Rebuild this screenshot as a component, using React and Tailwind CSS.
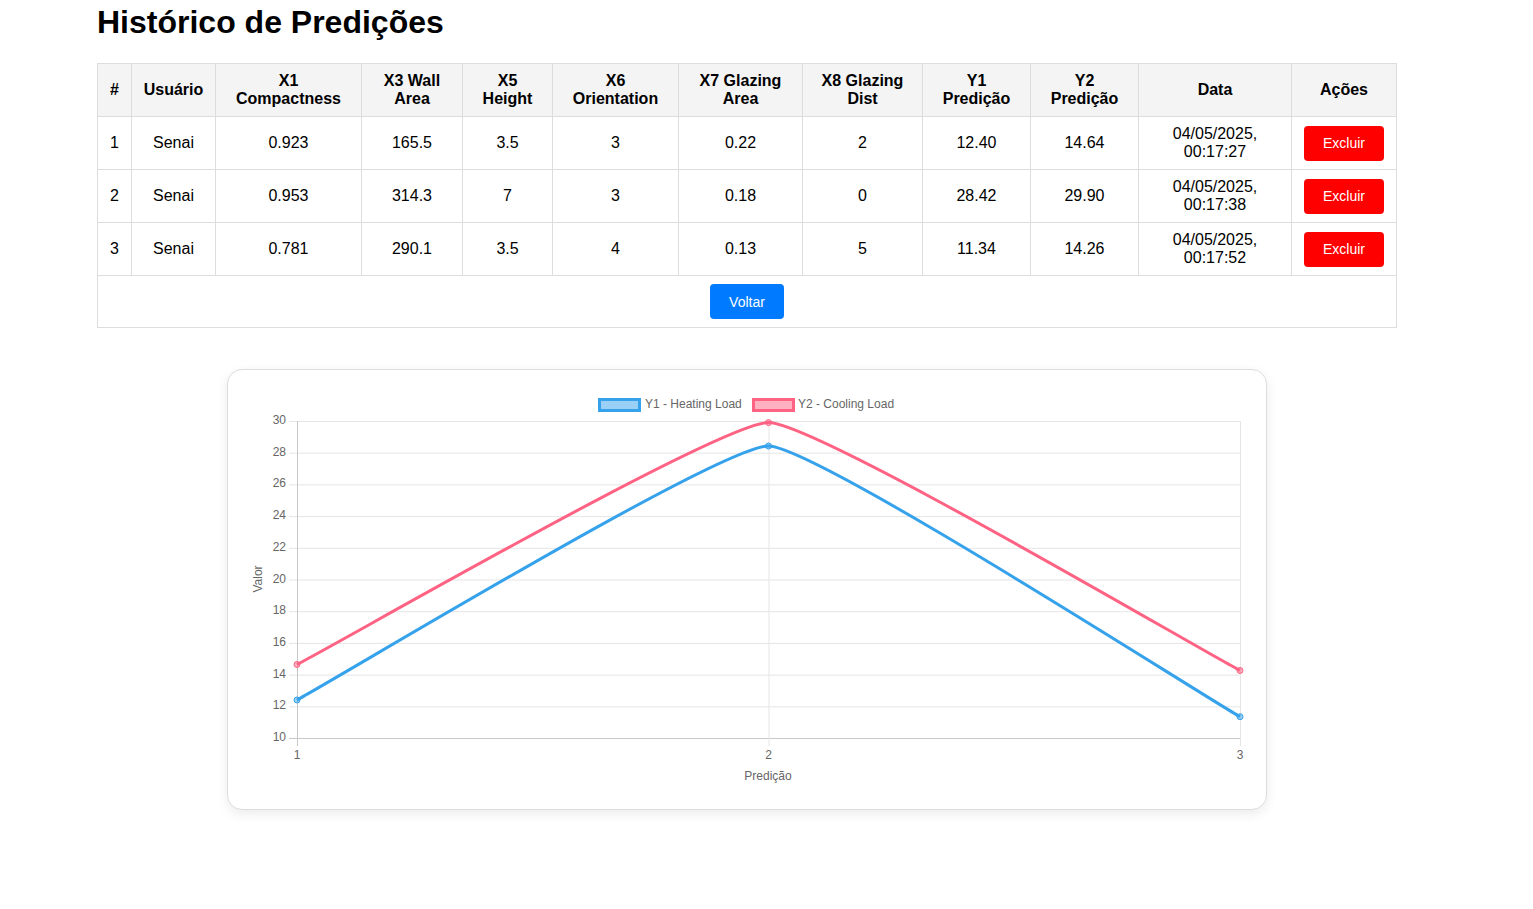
import React from 'react';

const rows = [
  { id: 1, user: 'Senai', x1: '0.923', x3: '165.5', x5: '3.5', x6: '3', x7: '0.22', x8: '2', y1: 12.4, y2: 14.64, date: '04/05/2025,', time: '00:17:27' },
  { id: 2, user: 'Senai', x1: '0.953', x3: '314.3', x5: '7', x6: '3', x7: '0.18', x8: '0', y1: 28.42, y2: 29.9, date: '04/05/2025,', time: '00:17:38' },
  { id: 3, user: 'Senai', x1: '0.781', x3: '290.1', x5: '3.5', x6: '4', x7: '0.13', x8: '5', y1: 11.34, y2: 14.26, date: '04/05/2025,', time: '00:17:52' },
];

const headers = [
  ['#', 'w-[34px]'],
  ['Usuário', 'w-[84px]'],
  ['X1\nCompactness', 'w-[146px]'],
  ['X3 Wall Area', 'w-[101px]'],
  ['X5 Height', 'w-[90px]'],
  ['X6 Orientation', 'w-[126px]'],
  ['X7 Glazing Area', 'w-[124px]'],
  ['X8 Glazing Dist', 'w-[120px]'],
  ['Y1 Predição', 'w-[108px]'],
  ['Y2 Predição', 'w-[108px]'],
  ['Data', 'w-[153px]'],
  ['Ações', 'w-[105px]'],
];

// geometria do gráfico (coordenadas relativas ao interior do cartão)
const X0 = 69;
const X1 = 1012;
const YTOP = 51;
const YBOT = 368;
const px = (i) => X0 + (i * (X1 - X0)) / 2;
const py = (v) => YBOT - ((v - 10) * (YBOT - YTOP)) / 20;

function curvePath(values, t = 0.1) {
  const pts = values.map((v, i) => ({ x: px(i), y: py(v) }));
  const cps = pts.map((p, i) => {
    const prev = pts[i - 1] || p;
    const next = pts[i + 1] || p;
    const d01 = Math.hypot(p.x - prev.x, p.y - prev.y);
    const d12 = Math.hypot(next.x - p.x, next.y - p.y);
    const s = d01 + d12 || 1;
    const fa = (t * d01) / s;
    const fb = (t * d12) / s;
    return {
      prev: { x: p.x - fa * (next.x - prev.x), y: p.y - fa * (next.y - prev.y) },
      next: { x: p.x + fb * (next.x - prev.x), y: p.y + fb * (next.y - prev.y) },
    };
  });
  let d = `M${pts[0].x},${pts[0].y}`;
  for (let i = 1; i < pts.length; i++) {
    const a = cps[i - 1].next;
    const b = cps[i].prev;
    d += ` C${a.x},${a.y} ${b.x},${b.y} ${pts[i].x},${pts[i].y}`;
  }
  return d;
}

function Chart() {
  const ticks = [10, 12, 14, 16, 18, 20, 22, 24, 26, 28, 30];
  const y1 = rows.map((r) => r.y1);
  const y2 = rows.map((r) => r.y2);
  return (
    <svg width="1038" height="439" className="block" style={{ fontFamily: '"Liberation Sans", Arial, sans-serif' }}>
      {/* legenda */}
      <rect x="371.5" y="29.5" width="40" height="11" fill="rgba(54,162,235,0.5)" stroke="rgb(54,162,235)" strokeWidth="3" />
      <text x="417" y="38" fontSize="12" fill="#666">Y1 - Heating Load</text>
      <rect x="525.5" y="29.5" width="40" height="11" fill="rgba(255,99,132,0.5)" stroke="rgb(255,99,132)" strokeWidth="3" />
      <text x="570" y="38" fontSize="12" fill="#666">Y2 - Cooling Load</text>

      {/* grade horizontal */}
      {ticks.map((v) => (
        <g key={v}>
          <line x1={X0 - 8} x2={X1} y1={py(v) + 0.5} y2={py(v) + 0.5} stroke={v === 10 ? '#c8c8c8' : '#e5e5e5'} strokeWidth="1" />
          <text x={X0 - 11} y={py(v) + 3} fontSize="12" fill="#666" textAnchor="end">{v}</text>
        </g>
      ))}
      {/* grade vertical */}
      {[0, 1, 2].map((i) => (
        <g key={i}>
          <line x1={px(i) + 0.5} x2={px(i) + 0.5} y1={YTOP} y2={YBOT + 8} stroke={i === 0 ? '#c8c8c8' : '#e5e5e5'} strokeWidth="1" />
          <text x={px(i)} y={389} fontSize="12" fill="#666" textAnchor="middle">{i + 1}</text>
        </g>
      ))}
      <text x="540" y="410" fontSize="12" fill="#666" textAnchor="middle">Predição</text>
      <text x="34" y="209" fontSize="12" fill="#666" textAnchor="middle" transform="rotate(-90 34 209)">Valor</text>

      {/* séries */}
      <path d={curvePath(y1)} fill="none" stroke="rgb(54,162,235)" strokeWidth="3" />
      <path d={curvePath(y2)} fill="none" stroke="rgb(255,99,132)" strokeWidth="3" />
      {y1.map((v, i) => (
        <circle key={`a${i}`} cx={px(i)} cy={py(v)} r="3" fill="rgba(54,162,235,0.5)" stroke="rgb(54,162,235)" strokeWidth="1" />
      ))}
      {y2.map((v, i) => (
        <circle key={`b${i}`} cx={px(i)} cy={py(v)} r="3" fill="rgba(255,99,132,0.5)" stroke="rgb(255,99,132)" strokeWidth="1" />
      ))}
    </svg>
  );
}

export default function App() {
  return (
    <div className="min-h-screen bg-white text-black pb-[99px]" style={{ fontFamily: '"Liberation Sans", Arial, sans-serif' }}>
      <div className="ml-[97px] w-[1300px]">
        <h1 className="text-[32px] font-bold leading-[37px] pt-[4px] mb-[22px]">Histórico de Predições</h1>

        <table className="w-[1300px] table-fixed border-collapse text-[16px] leading-[18px] text-center">
          <thead>
            <tr className="bg-[#f4f4f4]">
              {headers.map(([h, w]) => (
                <th key={h} className={`${w} border border-[#dddddd] px-2 py-[8px] h-[53px] font-bold whitespace-pre-line`}>{h}</th>
              ))}
            </tr>
          </thead>
          <tbody>
            {rows.map((r) => (
              <tr key={r.id}>
                <td className="border border-[#dddddd] px-2 py-[8px] h-[53px]">{r.id}</td>
                <td className="border border-[#dddddd] px-2 py-[8px]">{r.user}</td>
                <td className="border border-[#dddddd] px-2 py-[8px]">{r.x1}</td>
                <td className="border border-[#dddddd] px-2 py-[8px]">{r.x3}</td>
                <td className="border border-[#dddddd] px-2 py-[8px]">{r.x5}</td>
                <td className="border border-[#dddddd] px-2 py-[8px]">{r.x6}</td>
                <td className="border border-[#dddddd] px-2 py-[8px]">{r.x7}</td>
                <td className="border border-[#dddddd] px-2 py-[8px]">{r.x8}</td>
                <td className="border border-[#dddddd] px-2 py-[8px]">{r.y1.toFixed(2)}</td>
                <td className="border border-[#dddddd] px-2 py-[8px]">{r.y2.toFixed(2)}</td>
                <td className="border border-[#dddddd] px-2 py-[8px]">
                  {r.date}
                  <br />
                  {r.time}
                </td>
                <td className="border border-[#dddddd] px-2 py-[8px]">
                  <button className="bg-[#ff0000] text-white text-[14px] leading-[16px] rounded-[4px] w-[80px] h-[35px]">Excluir</button>
                </td>
              </tr>
            ))}
            <tr>
              <td colSpan={12} className="border border-[#dddddd] px-2 py-[8px] h-[52px]">
                <button className="bg-[#007bff] text-white text-[14px] leading-[16px] rounded-[4px] w-[74px] h-[35px]">Voltar</button>
              </td>
            </tr>
          </tbody>
        </table>

        <div className="mx-auto mt-[41px] w-[1040px] h-[441px] rounded-[15px] border border-[#dddddd] bg-white shadow-[0_4px_12px_rgba(0,0,0,0.08)] overflow-hidden">
          <Chart />
        </div>
      </div>
    </div>
  );
}
